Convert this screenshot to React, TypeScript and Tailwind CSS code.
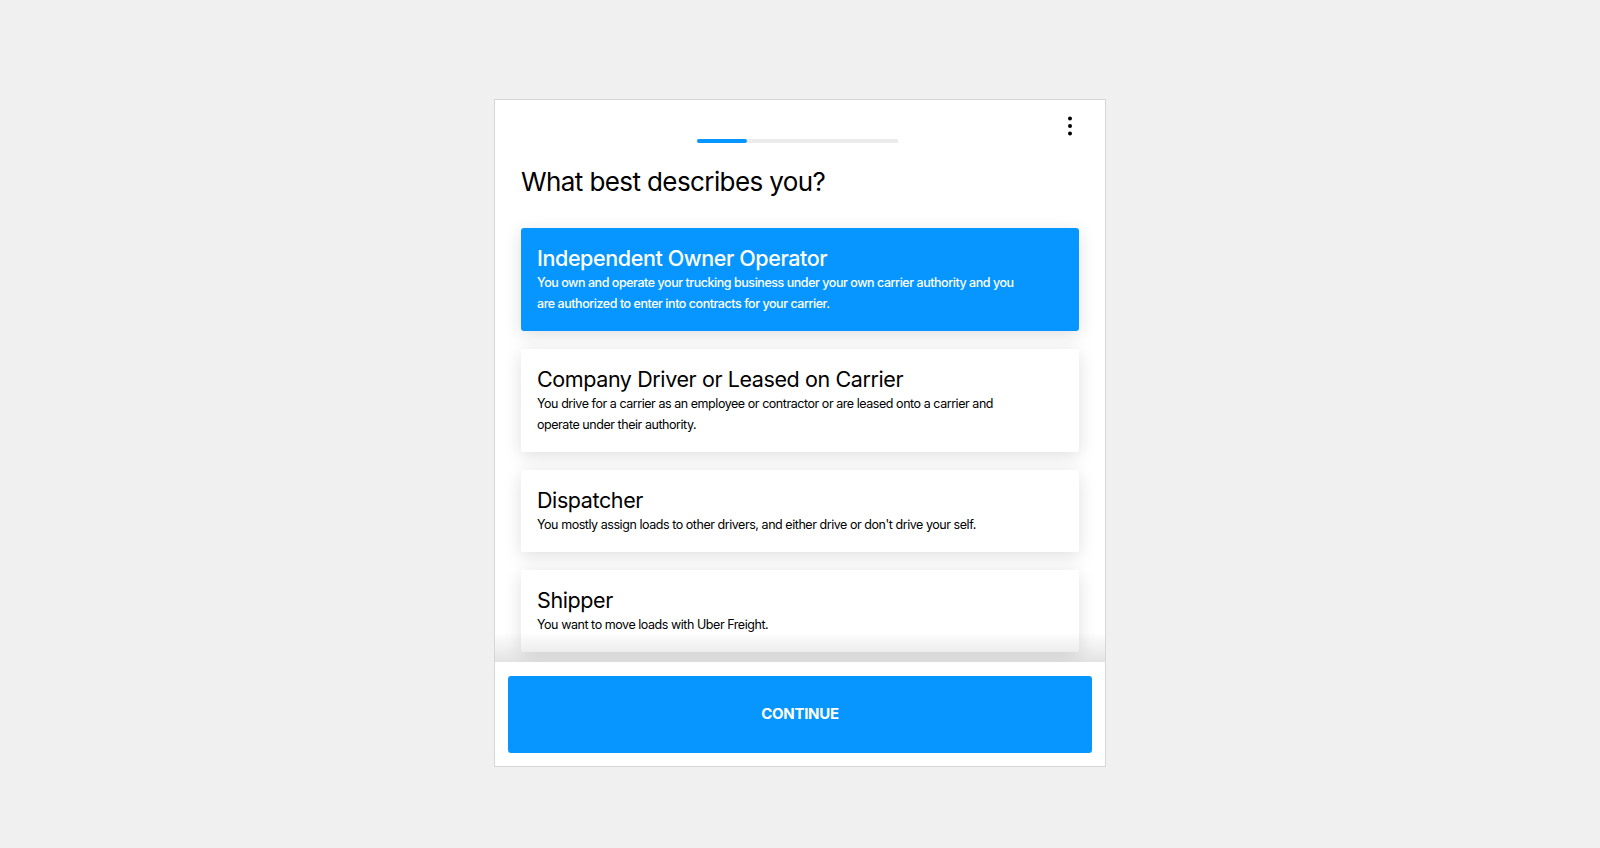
import React, { useState } from 'react'

interface Role {
  title: string
  desc: string
}

const roles: Role[] = [
  {
    title: 'Independent Owner Operator',
    desc: 'You own and operate your trucking business under your own carrier authority and you are authorized to enter into contracts for your carrier.',
  },
  {
    title: 'Company Driver or Leased on Carrier',
    desc: 'You drive for a carrier as an employee or contractor or are leased onto a carrier and operate under their authority.',
  },
  {
    title: 'Dispatcher',
    desc: "You mostly assign loads to other drivers, and either drive or don't drive your self.",
  },
  {
    title: 'Shipper',
    desc: 'You want to move loads with Uber Freight.',
  },
]

function MoreIcon() {
  return (
    <svg width="6" height="20" viewBox="0 0 6 20" className="text-black">
      <circle cx="3" cy="2.5" r="2" fill="currentColor" />
      <circle cx="3" cy="10" r="2" fill="currentColor" />
      <circle cx="3" cy="17.5" r="2" fill="currentColor" />
    </svg>
  )
}

export default function App() {
  const [selected, setSelected] = useState(0)

  return (
    <div className="min-h-screen bg-[#f0f0f0] pt-[99px] font-['Inter',sans-serif] text-black">
      <div className="mx-auto flex h-[668px] w-[612px] flex-col border border-[#d6d6d6] bg-white">
        <div className="relative flex-1 overflow-hidden">
          <button className="absolute right-[32px] top-[16px] p-0">
            <MoreIcon />
          </button>

          <div className="flex justify-center pt-[39px] pr-[5px]">
            <div className="h-[4px] w-[201px] bg-[#ececec]">
              <div className="h-[4px] w-[50px] rounded-full bg-[#0796ff]" />
            </div>
          </div>

          <div className="px-[26px]">
            <h1 className="mt-[22px] text-[26px] leading-[34px] tracking-[-0.6px]">What best describes you?</h1>

            <div className="mt-[29px] flex flex-col gap-[18px]">
              {roles.map((r, i) => {
                const active = i === selected
                return (
                  <div
                    key={r.title}
                    onClick={() => setSelected(i)}
                    className={
                      active
                        ? 'cursor-pointer rounded-[3px] bg-[#0796ff] px-4 pt-[16px] pb-[17px] text-white shadow-[0_4px_18px_rgba(0,0,0,0.13)]'
                        : 'cursor-pointer rounded-[2px] bg-white px-4 pt-[16px] pb-[17px] text-black shadow-[0_4px_18px_rgba(0,0,0,0.13)]'
                    }
                  >
                    <div className={active ? 'text-[21.5px] font-medium leading-[28px] tracking-[-0.4px]' : 'text-[21.5px] leading-[28px] tracking-[-0.4px]'}>
                      {r.title}
                    </div>
                    <p className={active ? 'max-w-[480px] text-[12.5px] font-medium leading-[21px] tracking-[-0.45px]' : 'max-w-[480px] text-[12.5px] leading-[21px] tracking-[-0.45px]'}>
                      {r.desc}
                    </p>
                  </div>
                )
              })}
            </div>
          </div>

          <div className="pointer-events-none absolute bottom-0 left-0 right-0 h-[30px] bg-linear-to-b from-transparent to-[rgba(0,0,0,0.11)]" />
        </div>

        <div className="px-[13px] pt-[14px] pb-[13px]">
          <button className="flex h-[77px] w-full items-center justify-center rounded-[3px] bg-[#0796ff] text-[15px] font-bold tracking-[-0.3px] text-white">
            CONTINUE
          </button>
        </div>
      </div>
    </div>
  )
}
